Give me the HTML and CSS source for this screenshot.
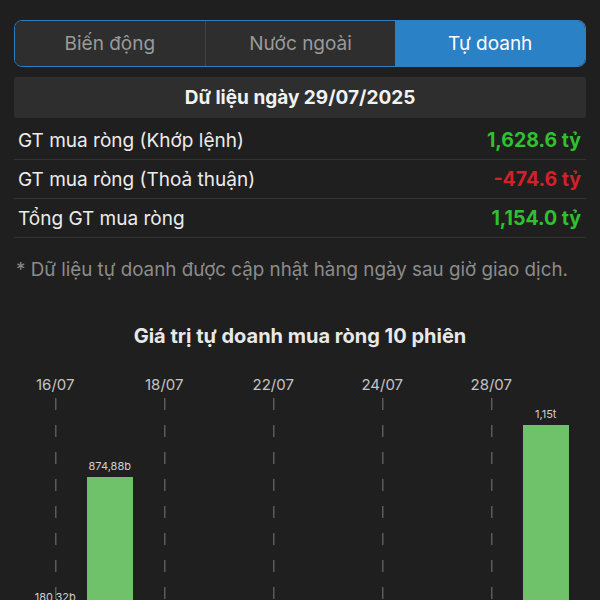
FILE: index.html
```html
<!DOCTYPE html>
<html lang="vi">
<head>
    <meta charset="UTF-8">
    <meta name="viewport" content="width=device-width, initial-scale=1.0">
    <title>Tự doanh</title>
    <link rel="stylesheet" href="styles.css">
</head>
<body>

<div class="tabs">
    <div class="tab">Biến động</div>
    <div class="tab">Nước ngoài</div>
    <div class="tab active">Tự doanh</div>
</div>

<div class="date-box">Dữ liệu ngày 29/07/2025</div>

<div class="rows">
    <div class="row">
        <span>GT mua ròng (Khớp lệnh)</span>
        <span class="val up">1,628.6 tỷ</span>
    </div>
    <div class="row">
        <span>GT mua ròng (Thoả thuận)</span>
        <span class="val down">-474.6 tỷ</span>
    </div>
    <div class="row">
        <span>Tổng GT mua ròng</span>
        <span class="val up">1,154.0 tỷ</span>
    </div>
</div>

<p class="note">* Dữ liệu tự doanh được cập nhật hàng ngày sau giờ giao dịch.</p>

<h2 class="chart-title">Giá trị tự doanh mua ròng 10 phiên</h2>

<div class="chart">
    <div class="col">
        <div class="date">16/07</div>
        <div class="plot grid">
            <span class="bar-label">180,32b</span>
            <div class="bar" style="height: 34px"></div>
        </div>
    </div>
    <div class="col">
        <div class="date"></div>
        <div class="plot">
            <span class="bar-label">874,88b</span>
            <div class="bar" style="height: 165px"></div>
        </div>
    </div>
    <div class="col">
        <div class="date">18/07</div>
        <div class="plot grid"></div>
    </div>
    <div class="col">
        <div class="date"></div>
        <div class="plot"></div>
    </div>
    <div class="col">
        <div class="date">22/07</div>
        <div class="plot grid"></div>
    </div>
    <div class="col">
        <div class="date"></div>
        <div class="plot"></div>
    </div>
    <div class="col">
        <div class="date">24/07</div>
        <div class="plot grid"></div>
    </div>
    <div class="col">
        <div class="date"></div>
        <div class="plot"></div>
    </div>
    <div class="col">
        <div class="date">28/07</div>
        <div class="plot grid"></div>
    </div>
    <div class="col">
        <div class="date"></div>
        <div class="plot">
            <span class="bar-label">1,15t</span>
            <div class="bar" style="height: 217px"></div>
        </div>
    </div>
</div>

</body>
</html>
```

FILE: styles.css
```css
body {
    font-family: Inter, "Noto Sans", sans-serif;
    background: #1f1f1f;
    color: #ececec;
    margin: 0;
    padding: 20px 14px 0;
    height: 600px;
    overflow: hidden;
    box-sizing: border-box;
}

.tabs {
    display: flex;
    height: 47px;
    border: 1px solid #2b7fc2;
    border-radius: 8px;
    overflow: hidden;
    box-sizing: border-box;
}

.tab {
    flex: 1;
    display: flex;
    align-items: center;
    justify-content: center;
    background: #2e2e2e;
    color: #9a9a9a;
    font-size: 19px;
}

.tab + .tab {
    border-left: 1px solid #444;
}

.tab.active {
    background: #2a81c5;
    color: #fff;
    border-left: none;
}

.date-box {
    margin-top: 10px;
    height: 41px;
    background: #2e2e2e;
    border-radius: 2px;
    display: flex;
    align-items: center;
    justify-content: center;
    font-size: 19px;
    font-weight: 700;
    color: #f2f2f2;
}

.rows {
    margin-top: 3px;
}

.row {
    display: flex;
    justify-content: space-between;
    align-items: center;
    height: 38px;
    padding: 0 5px 0 4px;
    border-bottom: 1px solid #343434;
    font-size: 19px;
    color: #ececec;
}

.val {
    font-weight: 700;
    font-size: 19.5px;
}

.up {
    color: #2fc12f;
}

.down {
    color: #d4202a;
}

.note {
    margin: 21px 0 0 2px;
    font-size: 18.8px;
    line-height: 22px;
    color: #8c8c8c;
    white-space: nowrap;
}

.chart-title {
    margin: 44px 0 0;
    text-align: center;
    font-size: 20px;
    line-height: 22px;
    font-weight: 700;
    color: #e8e8e8;
}

.chart {
    display: grid;
    grid-template-columns: repeat(10, 54.5px);
    margin: 29px 0 0 14px;
    height: 266px;
}

.col {
    display: flex;
    flex-direction: column;
    align-items: center;
}

.date {
    height: 18px;
    line-height: 18px;
    margin-bottom: 4px;
    font-size: 15px;
    color: #c4c4c4;
}

.plot {
    flex: 1;
    width: 100%;
    display: flex;
    flex-direction: column;
    justify-content: flex-end;
    align-items: center;
}

.plot.grid {
    background-image: repeating-linear-gradient(to bottom, #5a5a5a 0 12px, transparent 12px 27px);
    background-size: 1.5px 100%;
    background-position: center top;
    background-repeat: no-repeat;
}

.bar-label {
    font-size: 11px;
    line-height: 13px;
    margin-bottom: 4px;
    color: #cfcfcf;
}

.bar {
    width: 46px;
    background: #6fc16a;
}
```
